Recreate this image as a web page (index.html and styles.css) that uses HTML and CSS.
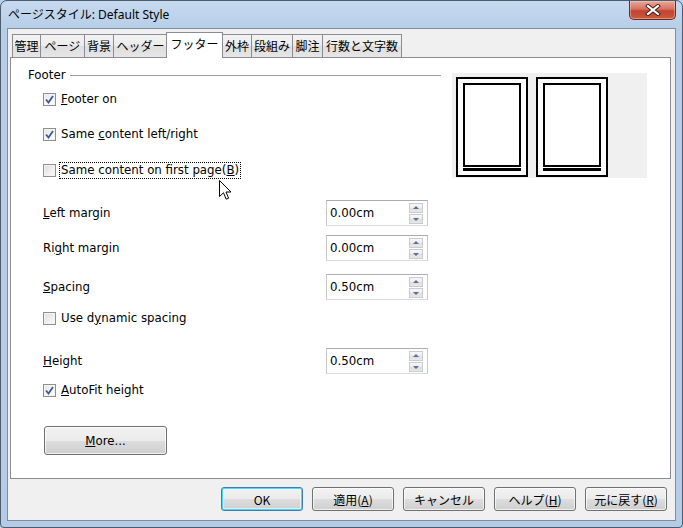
FILE: index.html
```html
<!DOCTYPE html>
<html lang="ja">
<head>
<meta charset="utf-8">
<title>ページスタイル: Default Style</title>
<link rel="stylesheet" href="styles.css">
</head>
<body>
<div class="window">
  <div class="titlebar">
    <span class="title">ページスタイル: Default Style</span>
    <div class="close">
      <svg width="16" height="12" viewBox="0 0 16 12">
        <path d="M3 2 L13 10 M13 2 L3 10" stroke="#3a1a14" stroke-width="4" stroke-linecap="square" fill="none"/>
        <path d="M3 2 L13 10 M13 2 L3 10" stroke="#ffffff" stroke-width="2.2" stroke-linecap="square" fill="none"/>
      </svg>
    </div>
  </div>
  <div class="client">
    <div class="tabs">
      <div class="tab t-kanri">管理</div>
      <div class="tab t-page">ページ</div>
      <div class="tab t-bg">背景</div>
      <div class="tab t-header">ヘッダー</div>
      <div class="tab active">フッター</div>
      <div class="tab t-border">外枠</div>
      <div class="tab t-cols">段組み</div>
      <div class="tab t-foot">脚注</div>
      <div class="tab t-grid">行数と文字数</div>
    </div>
    <div class="panel">
      <div class="form">
        <div class="group-head"><span>Footer</span><div class="rule"></div></div>
        <div class="check-row r-on">
          <span class="cb checked"><svg width="9" height="9" viewBox="0 0 9 9"><path d="M1 4.5 L3.5 7.5 L8 1" stroke="#3b5a97" stroke-width="1.8" fill="none"/></svg></span>
          <span class="lbl"><u>F</u>ooter on</span>
        </div>
        <div class="check-row r-same">
          <span class="cb checked"><svg width="9" height="9" viewBox="0 0 9 9"><path d="M1 4.5 L3.5 7.5 L8 1" stroke="#3b5a97" stroke-width="1.8" fill="none"/></svg></span>
          <span class="lbl">Same <u>c</u>ontent left/right</span>
        </div>
        <div class="check-row r-first">
          <span class="cb"></span>
          <span class="lbl focus">Same content on first page(<u>B</u>)</span>
        </div>
        <div class="field-row r-left">
          <span class="flabel"><u>L</u>eft margin</span>
          <div class="spin"><span class="val">0.00cm</span><div class="spinbtns"><span class="sb up"></span><span class="sb down"></span></div></div>
        </div>
        <div class="field-row r-right">
          <span class="flabel">Ri<u>g</u>ht margin</span>
          <div class="spin"><span class="val">0.00cm</span><div class="spinbtns"><span class="sb up"></span><span class="sb down"></span></div></div>
        </div>
        <div class="field-row r-spacing">
          <span class="flabel"><u>S</u>pacing</span>
          <div class="spin"><span class="val">0.50cm</span><div class="spinbtns"><span class="sb up"></span><span class="sb down"></span></div></div>
        </div>
        <div class="check-row r-dyn">
          <span class="cb"></span>
          <span class="lbl">Use d<u>y</u>namic spacing</span>
        </div>
        <div class="field-row r-height">
          <span class="flabel"><u>H</u>eight</span>
          <div class="spin"><span class="val">0.50cm</span><div class="spinbtns"><span class="sb up"></span><span class="sb down"></span></div></div>
        </div>
        <div class="check-row r-auto">
          <span class="cb checked"><svg width="9" height="9" viewBox="0 0 9 9"><path d="M1 4.5 L3.5 7.5 L8 1" stroke="#3b5a97" stroke-width="1.8" fill="none"/></svg></span>
          <span class="lbl"><u>A</u>utoFit height</span>
        </div>
        <div class="more-row">
          <button class="btn more"><u>M</u>ore...</button>
        </div>
      </div>
      <div class="preview">
        <div class="page"><div class="pbody"></div><div class="pfoot"></div></div>
        <div class="page"><div class="pbody"></div><div class="pfoot"></div></div>
      </div>
    </div>
    <div class="buttons">
      <button class="btn dlg default">OK</button>
      <button class="btn dlg">適用(<u>A</u>)</button>
      <button class="btn dlg">キャンセル</button>
      <button class="btn dlg">ヘルプ(<u>H</u>)</button>
      <button class="btn dlg">元に戻す(<u>R</u>)</button>
    </div>
  </div>
  <svg class="cursor" width="13" height="21" viewBox="0 0 13 21">
    <path d="M0.5 0.5 L0.5 16.5 L4.5 12.8 L7.2 19.2 L9.6 18.2 L7 12 L12 12 Z" fill="#ffffff" stroke="#000000" stroke-width="1" stroke-linejoin="miter"/>
  </svg>
</div>
</body>
</html>
```
FILE: styles.css
```css
* { box-sizing: border-box; }
html, body { margin: 0; padding: 0; }
body {
  width: 683px;
  height: 528px;
  overflow: hidden;
  background: #b9d1ea;
}
.window {
  position: relative;
  width: 683px;
  height: 528px;
  border: 1px solid #4e5b6b;
  border-radius: 7px 7px 4px 4px;
  background: linear-gradient(to bottom, #c6daef 0px, #b7cee8 28px, #b4cce6 100%);
  padding: 0 6px 6px 6px;
  display: flex;
  flex-direction: column;
  font-family: "DejaVu Sans", "Noto Sans CJK JP", sans-serif;
  font-size: 11.8px;
  color: #000;
}
.titlebar {
  height: 27px;
  display: flex;
  align-items: flex-start;
}
.title {
  font-family: "Noto Sans", "Noto Sans CJK JP", sans-serif;
  font-size: 12px;
  line-height: 16px;
  padding: 6px 0 0 1px;
  color: #000;
}
.close {
  margin-left: auto;
  width: 47px;
  height: 19px;
  border: 1px solid #6b2a20;
  border-top: none;
  border-radius: 0 0 5px 5px;
  background: linear-gradient(to bottom, #e8a99c 0%, #d7705f 45%, #c24330 55%, #c95b3f 100%);
  display: flex;
  align-items: center;
  justify-content: center;
  box-shadow: inset 0 0 0 1px rgba(255,210,200,0.45);
}
.client {
  flex: 1;
  background: #f0f0f0;
  border: 1px solid #7d8ea2;
  display: flex;
  flex-direction: column;
}
.tabs {
  height: 28px;
  display: flex;
  align-items: flex-end;
  padding-left: 4px;
  font-family: "Noto Sans CJK JP", sans-serif;
  font-size: 12px;
}
.tab {
  height: 23px;
  padding: 0;
  text-align: center;
  line-height: 21px;
  border: 1px solid #898c95;
  border-bottom: none;
  margin-right: -1px;
  background: linear-gradient(to bottom, #f3f3f3 0%, #ebebeb 50%, #dedede 51%, #e6e6e6 100%);
  white-space: nowrap;
  flex: none;
}
.t-kanri { width: 29px; }
.t-page { width: 45px; }
.t-bg { width: 30px; }
.t-header { width: 55px; }
.t-border { width: 30px; }
.t-cols { width: 42px; }
.t-foot { width: 31px; }
.t-grid { width: 80px; }
.tab.active {
  position: relative;
  z-index: 1;
  width: 57px;
  height: 26px;
  margin: 0 -1px -1px -1px;
  line-height: 22px;
  background: #ffffff;
}
.panel {
  height: 422px;
  margin: 0 4px 0 2px;
  border: 1px solid #898c95;
  background: #ffffff;
  display: flex;
  align-items: flex-start;
}
.form {
  width: 430px;
  padding: 9px 0 0 17px;
  display: flex;
  flex-direction: column;
}
.group-head {
  height: 16px;
  display: flex;
  align-items: center;
}
.rule {
  flex: 1;
  height: 1px;
  background: #a0a0a0;
  margin-left: 4px;
}
.check-row {
  height: 20px;
  margin-left: 15px;
  display: flex;
  align-items: center;
}
.cb {
  width: 13px;
  height: 13px;
  flex: none;
  border: 1px solid #8e8f8f;
  background: linear-gradient(135deg, #dcdcdc 0%, #f0f0f0 60%, #fbfbfb 100%);
  box-shadow: inset 0 0 0 1px #f4f4f4;
  display: flex;
  align-items: center;
  justify-content: center;
  margin-right: 4px;
}
.cb.checked { background: linear-gradient(135deg, #e4e4e4 0%, #f6f6f6 60%, #ffffff 100%); }
.lbl { padding: 0 1px; line-height: 15px; border: 1px solid transparent; margin-left: -1px; }
.lbl.focus { border: 1px dotted #000; }
.r-on { margin-top: 6px; }
.r-same { margin-top: 15px; }
.r-first { margin-top: 16px; }
.field-row {
  height: 26px;
  margin-left: 15px;
  display: flex;
  align-items: center;
}
.flabel { width: 283px; flex: none; }
.r-left { margin-top: 20px; }
.r-right { margin-top: 9px; }
.r-spacing { margin-top: 13px; }
.r-dyn { margin-top: 8px; }
.r-height { margin-top: 20px; }
.r-auto { margin-top: 6px; }
.spin {
  width: 102px;
  height: 26px;
  border: 1px solid #abadb3;
  border-left-color: #c5c8cf;
  border-right-color: #c5c8cf;
  border-bottom-color: #d6dbe2;
  background: #fff;
  display: flex;
  align-items: center;
}
.val { padding-left: 3px; }
.spinbtns {
  margin-left: auto;
  margin-right: 4px;
  width: 14px;
  display: flex;
  flex-direction: column;
  gap: 1px;
}
.sb {
  position: relative;
  height: 10px;
  border: 1px solid #c9cbd0;
  background: linear-gradient(to bottom, #f7f7f7 0%, #ececec 50%, #dedede 51%, #e8e8e8 100%);
}
.sb::after {
  content: "";
  position: absolute;
  left: 3px;
  width: 0;
  height: 0;
  border-left: 3px solid transparent;
  border-right: 3px solid transparent;
}
.sb.up::after { top: 2px; border-bottom: 3px solid #5b6ea0; }
.sb.down::after { top: 3px; border-top: 3px solid #5b6ea0; }
.more-row { margin-top: 26px; margin-left: 16px; }
.btn {
  font-family: "DejaVu Sans", "Noto Sans CJK JP", sans-serif;
  font-size: 11.8px;
  color: #000;
  border: 1px solid #707070;
  border-radius: 3px;
  background: linear-gradient(to bottom, #f2f2f2 0%, #ebebeb 50%, #dddddd 51%, #cfcfcf 100%);
  box-shadow: inset 0 0 0 1px rgba(255,255,255,0.7);
  padding: 0;
  margin: 0;
}
.btn u { text-decoration: underline; }
.more { width: 123px; height: 29px; }
.preview {
  margin: 15px 0 0 11px;
  width: 195px;
  height: 105px;
  background: #f0f0f0;
  padding: 4px 0 0 4px;
  display: flex;
  gap: 8px;
}
.page {
  width: 72px;
  height: 100px;
  border: 2px solid #000;
  background: #fff;
  padding: 4px 5px;
  display: flex;
  flex-direction: column;
}
.pbody { flex: 1; border: 2px solid #000; }
.pfoot { height: 3px; margin-top: 1px; background: #000; }
.buttons {
  flex: 1;
  display: flex;
  justify-content: flex-end;
  align-items: flex-start;
  padding: 8px 8px 0 0;
  gap: 9px;
}
.dlg {
  width: 82px;
  height: 24px;
  font-family: "Noto Sans CJK JP", sans-serif;
  font-size: 12px;
}
.dlg.default {
  border-color: #3c7fb1;
  box-shadow: inset 0 0 0 1px #48d8fb, inset 0 0 0 2px rgba(255,255,255,0.5);
}
.cursor {
  position: absolute;
  left: 218px;
  top: 179px;
}
```
